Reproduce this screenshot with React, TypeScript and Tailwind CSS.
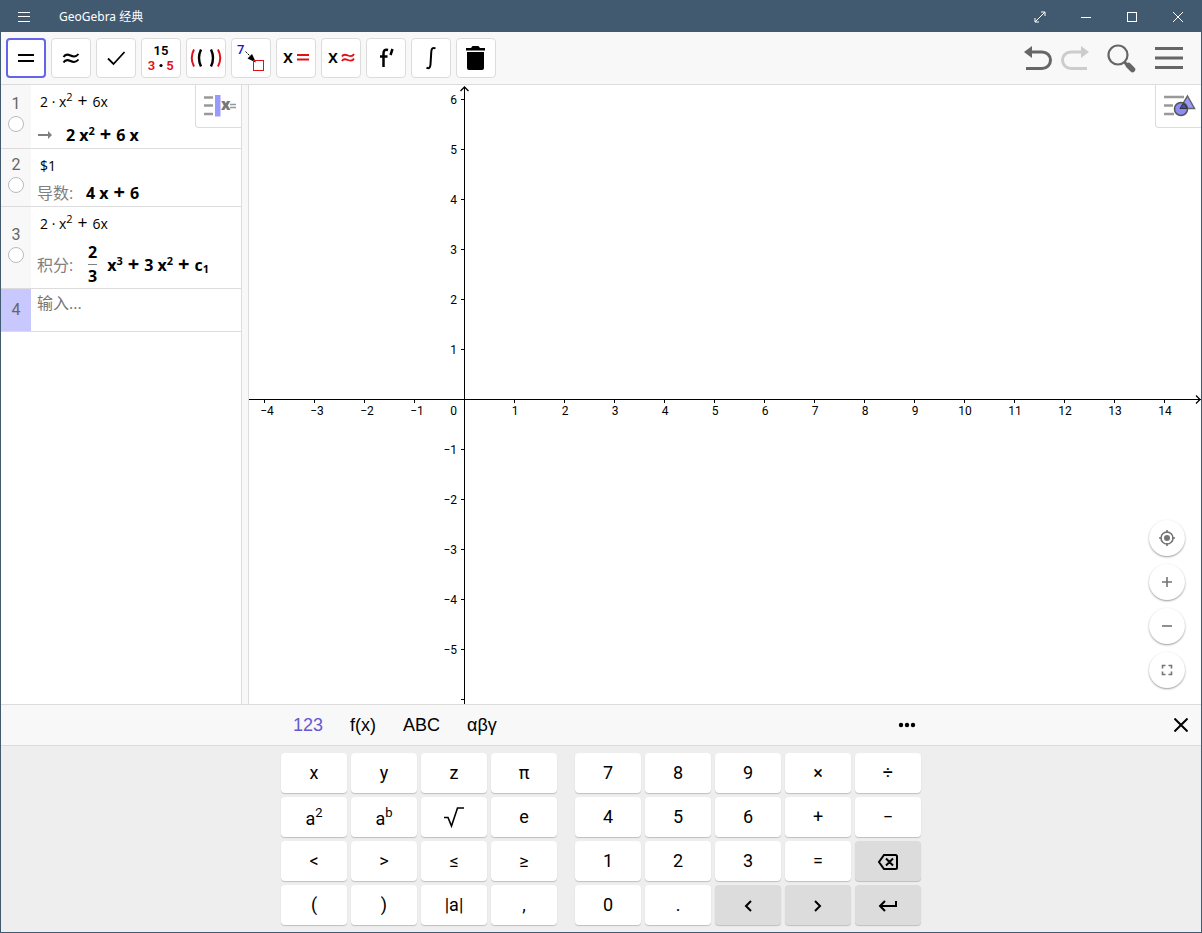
import { useState, type ReactNode } from 'react';

const RED = '#e01018';
const UNIT = 50;
const X_TICKS = [-4, -3, -2, -1, 1, 2, 3, 4, 5, 6, 7, 8, 9, 10, 11, 12, 13, 14];
const Y_TICKS = [6, 5, 4, 3, 2, 1, -1, -2, -3, -4, -5, -6];

const label = (n: number) => (n < 0 ? `−${-n}` : `${n}`);

function TitleBar() {
  return (
    <header className="flex h-[31px] items-center bg-[#425a70] text-white">
      <button type="button" aria-label="Menu" className="flex h-full w-[46px] items-center justify-center">
        <svg width="12" height="12" viewBox="0 0 12 12" stroke="currentColor" shapeRendering="crispEdges">
          <path d="M0 1.5h12M0 5.5h12M0 10.5h12" />
        </svg>
      </button>
      <h1 className="ml-3 flex-1 font-['Noto_Sans','Noto_Sans_CJK_SC',sans-serif] text-[12px] leading-4">GeoGebra 经典</h1>
      <button type="button" aria-label="Full screen" className="flex h-full w-[46px] items-center justify-center">
        <svg width="12" height="12" viewBox="0 0 12 12" fill="none" stroke="currentColor">
          <path d="M1 11 11 1M7 1h4v4M1 7v4h4" />
        </svg>
      </button>
      <button type="button" aria-label="Minimize" className="flex h-full w-[46px] items-center justify-center">
        <svg width="10" height="10" stroke="currentColor" shapeRendering="crispEdges">
          <path d="M0 5.5h10" />
        </svg>
      </button>
      <button type="button" aria-label="Maximize" className="flex h-full w-[46px] items-center justify-center">
        <svg width="10" height="10" fill="none" stroke="currentColor" shapeRendering="crispEdges">
          <path d="M.5.5h9v9h-9z" />
        </svg>
      </button>
      <button type="button" aria-label="Close" className="flex h-full w-[46px] items-center justify-center">
        <svg width="10" height="10" stroke="currentColor">
          <path d="M0 0l10 10M10 0L0 10" />
        </svg>
      </button>
    </header>
  );
}

const tools: { name: string; icon: ReactNode }[] = [
  { name: 'Evaluate', icon: <path d="M12 17h16M12 23h16" stroke="#000" strokeWidth="2" /> },
  {
    name: 'Numeric',
    icon: (
      <path
        d="M12.5 19c1.5-2.5 4-3 7-1.5s6 1 8-1.5M12.5 24.5c1.5-2.5 4-3 7-1.5s6 1 8-1.5"
        fill="none"
        stroke="#000"
        strokeWidth="2"
      />
    ),
  },
  { name: 'Keep Input', icon: <path d="M12 20.5 17.5 26 28.5 14" fill="none" stroke="#000" strokeWidth="1.8" /> },
  {
    name: 'Factor',
    icon: (
      <g fontSize="13" fontWeight="600" textAnchor="middle">
        <text x="20" y="17">15</text>
        <text x="10.5" y="32" fill={RED}>3</text>
        <text x="29" y="32" fill={RED}>5</text>
        <circle cx="20" cy="27.5" r="1.6" />
      </g>
    ),
  },
  {
    name: 'Expand',
    icon: (
      <g fill="none">
        <path d="M8 11.5q-4.5 8.500 0 17M32 11.5q4.5 8.500 0 17" stroke={RED} strokeWidth="2" />
        <path d="M15 11.500q-4 8.500 0 17M25 11.5q4 8.500 0 17" stroke="#000" strokeWidth="2.400" />
      </g>
    ),
  },
  {
    name: 'Substitute',
    icon: (
      <g>
        <text x="6" y="16" fontSize="13" fontWeight="500" fill="#1414c8">7</text>
        <path d="M14.5 13.5 20 19" stroke="#000" strokeDasharray="2 1" />
        <path d="M25 24.5 16.5 20.5 21 16z" />
        <path d="M22.5 22.5h10v10h-10z" fill="none" stroke={RED} shapeRendering="crispEdges" />
      </g>
    ),
  },
  {
    name: 'Solve',
    icon: (
      <g>
        <text x="7" y="25" fontSize="18" fontWeight="600" className="font-['Open_Sans',sans-serif]">x</text>
        <path d="M21 17h12M21 21.5h12" stroke={RED} strokeWidth="1.8" />
      </g>
    ),
  },
  {
    name: 'Solve Numerically',
    icon: (
      <g>
        <text x="7" y="25" fontSize="18" fontWeight="600" className="font-['Open_Sans',sans-serif]">x</text>
        <path
          d="M21 18.5c1-2 3.500-2 6-1s5 .5 6-1.500M21 23c1-2 3.500-2 6-1s5 .5 6-1.500"
          fill="none"
          stroke={RED}
          strokeWidth="1.8"
        />
      </g>
    ),
  },
  {
    name: 'Derivative',
    icon: (
      <g fill="none" stroke="#000">
        <path d="M22 12c-3-1-4.500.5-4.500 3.500V29M14 18.500h7.500" strokeWidth="2.5" />
        <path d="M26.500 11 24.500 17" strokeWidth="2.500" />
      </g>
    ),
  },
  {
    name: 'Integral',
    icon: (
      <path
        d="M24.500 10.500c-2.500-1.500-4 0-4.200 3l-.800 13c-.200 3-1.500 4.500-4 3.200"
        fill="none"
        stroke="#000"
        strokeWidth="2"
      />
    ),
  },
  {
    name: 'Delete',
    icon: <path d="M10 10h5l1.5-2h6l1.5 2h5v2.500H10zM11 14h17v16q0 2-2 2H13q-2 0-2-2z" />,
  },
];

function Toolbar() {
  const [active, setActive] = useState(0);

  return (
    <nav className="flex h-[53px] items-center justify-between border-b border-[#dcdcdc] bg-[#f8f8f8] pl-[5px]">
      <div className="flex gap-[5px]">
        {tools.map((tool, i) => (
          <button
            key={tool.name}
            type="button"
            aria-label={tool.name}
            aria-pressed={i === active}
            onClick={() => setActive(i)}
            className={
              i === active
                ? 'flex size-10 items-center justify-center rounded border-2 border-[#6464e8] bg-white'
                : 'flex size-10 items-center justify-center rounded border border-[#dcdcdc] bg-white'
            }
          >
            <svg width="40" height="40" viewBox="0 0 40 40" className="shrink-0 font-[Roboto,sans-serif]">
              {tool.icon}
            </svg>
          </button>
        ))}
      </div>
      <div className="flex items-center pr-[17px] text-[#666]">
        <button type="button" aria-label="Undo" className="mr-2">
          <svg width="30" height="28" viewBox="0 0 30 28" fill="none" stroke="currentColor" strokeWidth="3">
            <path d="M7 8h12c5 0 8.500 3.500 8.500 8S24 24.500 19 24.500H3" />
            <path d="M1 8 9 2v12z" fill="currentColor" stroke="none" />
          </svg>
        </button>
        <button type="button" aria-label="Redo" className="mr-[15px] text-[#ccc]">
          <svg width="30" height="28" viewBox="0 0 30 28" fill="none" stroke="currentColor" strokeWidth="3">
            <path d="M22 8H10c-5 0-8.500 3.500-8.500 8S5 24.500 10 24.500h16" />
            <path d="M28 8l-8-6v12z" fill="currentColor" stroke="none" />
          </svg>
        </button>
        <button type="button" aria-label="Search" className="mr-4">
          <svg width="32" height="30" viewBox="0 0 32 30" fill="none" stroke="currentColor">
            <circle cx="12" cy="12" r="9.500" strokeWidth="2.200" />
            <path d="M18.500 19 21.500 22.500" strokeWidth="3" />
            <path d="M22.500 22.500 26.500 26.500" strokeWidth="5.500" strokeLinecap="round" />
          </svg>
        </button>
        <button type="button" aria-label="Main menu">
          <svg width="30" height="28" viewBox="0 0 30 28" stroke="currentColor" strokeWidth="3">
            <path d="M1 4.500h28M1 14h28M1 23.500h28" />
          </svg>
        </button>
      </div>
    </nav>
  );
}

function Sup({ children }: { children: ReactNode }) {
  return <sup className="-top-[6px] text-[11px]">{children}</sup>;
}

function Plus() {
  return <span className="mx-[5px] text-[1.25em] leading-none">+</span>;
}

type RowProps = { num: number; height: string; input: ReactNode; prefix: ReactNode; output: ReactNode };

function CasRow({ num, height, input, prefix, output }: RowProps) {
  return (
    <li className={`flex border-b border-[#dcdcdc] ${height}`}>
      <div className="flex w-[30px] shrink-0 flex-col items-center justify-center gap-[2px] bg-[#f8f8f8] pb-2 text-[16px] leading-5 text-[#666]">
        {num}
        <button type="button" aria-label={`Show row ${num}`} className="size-4 rounded-full border border-[#bbb] bg-white" />
      </div>
      <div className="flex flex-1 flex-col justify-between pt-[3px] pl-[9px] font-['Open_Sans','Noto_Sans_CJK_SC',sans-serif] whitespace-nowrap">
        <div className="h-7 text-[14px] leading-7">{input}</div>
        <div className="-ml-[3px] flex items-center">
          <span className="flex h-[26px] items-center text-[16px] text-[#808080]">{prefix}</span>
          <span className="flex items-center text-[16px] font-bold">{output}</span>
        </div>
      </div>
    </li>
  );
}

function CasView() {
  const square = <>2 · x<Sup>2</Sup><Plus />6x</>;

  return (
    <section className="relative w-[241px] shrink-0 border-r border-[#dcdcdc] bg-white">
      <ol>
        <CasRow
          num={1}
          height="h-16"
          input={square}
          prefix={
            <svg width="29" height="10" viewBox="0 0 29 10" fill="#808080">
              <path d="M1 4h10V1l4 4-4 4V6H1z" />
            </svg>
          }
          output={<span>2 x<Sup>2</Sup><Plus />6 x</span>}
        />
        <CasRow
          num={2}
          height="h-[58px]"
          input="$1"
          prefix={<span className="w-[49px]">导数:</span>}
          output={<span>4 x<Plus />6</span>}
        />
        <CasRow
          num={3}
          height="h-[82px]"
          input={square}
          prefix={<span className="w-[49px]">积分:</span>}
          output={
            <>
              <span className="mr-2 flex flex-col px-[2px] text-center leading-[23px]">
                <span className="border-b border-[#808080]">2</span>
                <span>3</span>
              </span>
              <span>x<Sup>3</Sup><Plus />3 x<Sup>2</Sup><Plus />c<sub className="text-[11px]">1</sub></span>
            </>
          }
        />
        <li className="flex h-[43px] border-b border-[#dcdcdc]">
          <label htmlFor="cas-input" className="flex w-[30px] items-center justify-center bg-[#c8c8ff] text-[16px] text-[#666]">4</label>
          <input
            id="cas-input"
            placeholder="输入..."
            className="h-7 min-w-0 flex-1 pl-[6px] font-['Open_Sans','Noto_Sans_CJK_SC',sans-serif] text-[16px] outline-none placeholder:text-[#757575]"
          />
        </li>
      </ol>
      <button type="button" aria-label="CAS style bar" className="absolute top-0 right-0 rounded-bl border-b border-l border-[#dcdcdc] bg-white">
        <svg width="45" height="42" viewBox="0 0 45 42">
          <path d="M8 12.500h9M8 20.500h9M8 29h9" stroke="#999" strokeWidth="2.500" />
          <path d="M19 10h5.500v21.500H19z" fill="#9999ff" />
          <text x="25" y="25" fontSize="15" fontWeight="800" fill="#777" className="font-['Open_Sans',sans-serif]">x</text>
          <path d="M34 19.500h6M34 22.500h6" stroke="#999" strokeWidth="1.300" />
        </svg>
      </button>
    </section>
  );
}

const zoomButtons: { name: string; icon: ReactNode }[] = [
  {
    name: 'Standard view',
    icon: (
      <>
        <circle cx="9" cy="9" r="6" />
        <circle cx="9" cy="9" r="3" fill="currentColor" stroke="none" />
        <path d="M9 1v3M9 14v3M1 9h3M14 9h3" />
      </>
    ),
  },
  { name: 'Zoom in', icon: <path d="M4 9h10M9 4v10" /> },
  { name: 'Zoom out', icon: <path d="M4 9h10" /> },
  { name: 'Fit to screen', icon: <path d="M4.500 7.500v-3h3M10.500 4.500h3v3M13.500 10.500v3h-3M7.500 13.500h-3v-3" /> },
];

function GraphicsView() {
  return (
    <section className="relative flex-1 overflow-hidden border-l border-[#dcdcdc] bg-white">
      <svg className="absolute inset-0 size-full font-[Roboto,sans-serif] text-[12px]">
        <g stroke="#000" fill="none" shapeRendering="crispEdges">
          <line x1="0" y1="314.5" x2="100%" y2="314.5" />
          <line x1="215.5" y1="2" x2="215.5" y2="100%" />
        </g>
        <path d="M211.500 6l4-4 4 4" fill="none" stroke="#000" strokeWidth="1.300" />
        <svg x="100%" y="314" overflow="visible">
          <path d="M-5-3.500-1 .5-5 4.500" fill="none" stroke="#000" strokeWidth="1.300" />
        </svg>
        {X_TICKS.map((n) => (
          <g key={n}>
            <path d={`M${215.5 + n * UNIT} 314v4`} stroke="#000" shapeRendering="crispEdges" />
            <text x={n < 0 ? 218 + n * UNIT : 216 + n * UNIT} y="330" textAnchor="middle">{label(n)}</text>
          </g>
        ))}
        {Y_TICKS.map((n) => (
          <g key={n}>
            <path d={`M212 ${314.5 - n * UNIT}h3`} stroke="#000" shapeRendering="crispEdges" />
            {n > -6 && <text x="208" y={319 - n * UNIT} textAnchor="end">{label(n)}</text>}
          </g>
        ))}
        <text x="208" y="330" textAnchor="end">0</text>
      </svg>
      <button type="button" aria-label="Graphics style bar" className="absolute top-0 right-0 rounded-bl border-b border-l border-[#dcdcdc] bg-white">
        <svg width="45" height="42" viewBox="0 0 45 42">
          <path d="M8 12h20M8 20.500h9M8 29h10" stroke="#999" strokeWidth="2.500" />
          <path d="M31.500 11 38.500 23.500H24z" fill="#9999ff" stroke="#666" strokeWidth="1.500" />
          <circle cx="25" cy="24" r="6.500" fill="#8c8cf5" stroke="#555" strokeWidth="1.500" />
          <path d="M27 18.500Q31 20.500 31 23.500H24z" fill="#4c4ca8" stroke="#333" />
        </svg>
      </button>
      <div className="absolute right-4 bottom-4 flex flex-col gap-2">
        {zoomButtons.map((b) => (
          <button
            key={b.name}
            type="button"
            aria-label={b.name}
            className="flex size-9 items-center justify-center rounded-full bg-white text-[#757575] shadow-[0_1px_2px_rgba(0,0,0,0.4)]"
          >
            <svg width="18" height="18" viewBox="0 0 18 18" fill="none" stroke="currentColor" strokeWidth="1.600">
              {b.icon}
            </svg>
          </button>
        ))}
      </div>
    </section>
  );
}

const root = (
  <svg width="22" height="22" viewBox="0 0 22 22" fill="none" stroke="#000" strokeWidth="1.600">
    <path d="M1 11.500h4L8.500 20 14.500 2H21" />
  </svg>
);
const power = (exp: string) => (
  <span className="pt-1">a<sup className="-top-2 text-[13px]">{exp}</sup></span>
);

type Key = { name: string; face?: ReactNode; dark?: boolean };

const letterKeys: Key[] = [
  { name: 'x' }, { name: 'y' }, { name: 'z' }, { name: 'π' },
  { name: 'Square', face: power('2') }, { name: 'Power', face: power('b') }, { name: 'Square root', face: root }, { name: 'e' },
  { name: '<' }, { name: '>' }, { name: '≤' }, { name: '≥' },
  { name: '(' }, { name: ')' }, { name: '|a|' }, { name: ',' },
];

const numberKeys: Key[] = [
  { name: '7' }, { name: '8' }, { name: '9' }, { name: '×' }, { name: '÷' },
  { name: '4' }, { name: '5' }, { name: '6' }, { name: '+' }, { name: '−' },
  { name: '1' }, { name: '2' }, { name: '3' }, { name: '=' },
  {
    name: 'Backspace',
    dark: true,
    face: (
      <svg width="22" height="18" viewBox="0 0 22 18" fill="none" stroke="#000" strokeWidth="2">
        <path d="M7 2h11.500q1.500 0 1.500 1.500v11q0 1.500-1.500 1.500H7L2 9zM9 5.500l7 7M16 5.500l-7 7" />
      </svg>
    ),
  },
  { name: '0' }, { name: '.' },
  {
    name: 'Left',
    dark: true,
    face: <svg width="12" height="14" fill="none" stroke="#000" strokeWidth="2"><path d="M9 2 4 7l5 5" /></svg>,
  },
  {
    name: 'Right',
    dark: true,
    face: <svg width="12" height="14" fill="none" stroke="#000" strokeWidth="2"><path d="M3 2l5 5-5 5" /></svg>,
  },
  {
    name: 'Enter',
    dark: true,
    face: (
      <svg width="20" height="14" fill="none" stroke="#000" strokeWidth="2">
        <path d="M18 2v5H2M7 2 2 7l5 5" />
      </svg>
    ),
  },
];

function KeyButton({ name, face, dark }: Key) {
  return (
    <button
      type="button"
      aria-label={name}
      className={
        dark
          ? 'flex h-10 w-[66px] items-center justify-center rounded bg-[#dcdcdc] pt-[2px] shadow-[0_1px_1px_rgba(0,0,0,0.2)]'
          : 'flex h-10 w-[66px] items-center justify-center rounded bg-white text-[18px] leading-6 shadow-[0_1px_1px_rgba(0,0,0,0.2)]'
      }
    >
      {face ?? name}
    </button>
  );
}

function Keyboard() {
  const [tab, setTab] = useState('123');

  return (
    <section className="border-t border-[#dcdcdc] bg-[#eee]">
      <div className="flex h-[41px] items-center border-b border-[#dcdcdc] bg-[#f8f8f8] font-['Liberation_Sans',sans-serif] text-[18px]">
        <div className="flex-1" />
        <div className="flex w-[640px] items-center justify-between">
          <div className="flex gap-[27px] pl-[12px]" role="tablist">
            {['123', 'f(x)', 'ABC', 'αβγ'].map((t) => (
              <button
                key={t}
                type="button"
                role="tab"
                aria-selected={t === tab}
                onClick={() => setTab(t)}
                className={t === tab ? 'text-[#6557d2]' : 'text-black'}
              >
                {t}
              </button>
            ))}
          </div>
          <button type="button" aria-label="More" className="pr-[5px]">
            <svg width="18" height="6">
              <circle cx="3" cy="3" r="2.200" />
              <circle cx="9" cy="3" r="2.200" />
              <circle cx="15" cy="3" r="2.200" />
            </svg>
          </button>
        </div>
        <div className="flex flex-1 justify-end">
          <button type="button" aria-label="Close keyboard" className="mr-[13px]">
            <svg width="14" height="14" stroke="#000" strokeWidth="2">
              <path d="M.5.5l13 13M13.500.5l-13 13" />
            </svg>
          </button>
        </div>
      </div>
      <div className="flex justify-center gap-[18px] py-[7px] font-[Roboto,sans-serif]">
        <div className="grid grid-cols-4 gap-1">
          {letterKeys.map((k) => <KeyButton key={k.name} {...k} />)}
        </div>
        <div className="grid grid-cols-5 gap-1">
          {numberKeys.map((k) => <KeyButton key={k.name} {...k} />)}
        </div>
      </div>
    </section>
  );
}

export default function App() {
  return (
    <div className="flex min-h-screen flex-col border border-[#425a70] bg-white font-[Roboto,sans-serif] text-black">
      <TitleBar />
      <Toolbar />
      <main className="flex flex-1 bg-[#f8f8f8]">
        <CasView />
        <div className="w-[6px]" />
        <GraphicsView />
      </main>
      <Keyboard />
    </div>
  );
}
